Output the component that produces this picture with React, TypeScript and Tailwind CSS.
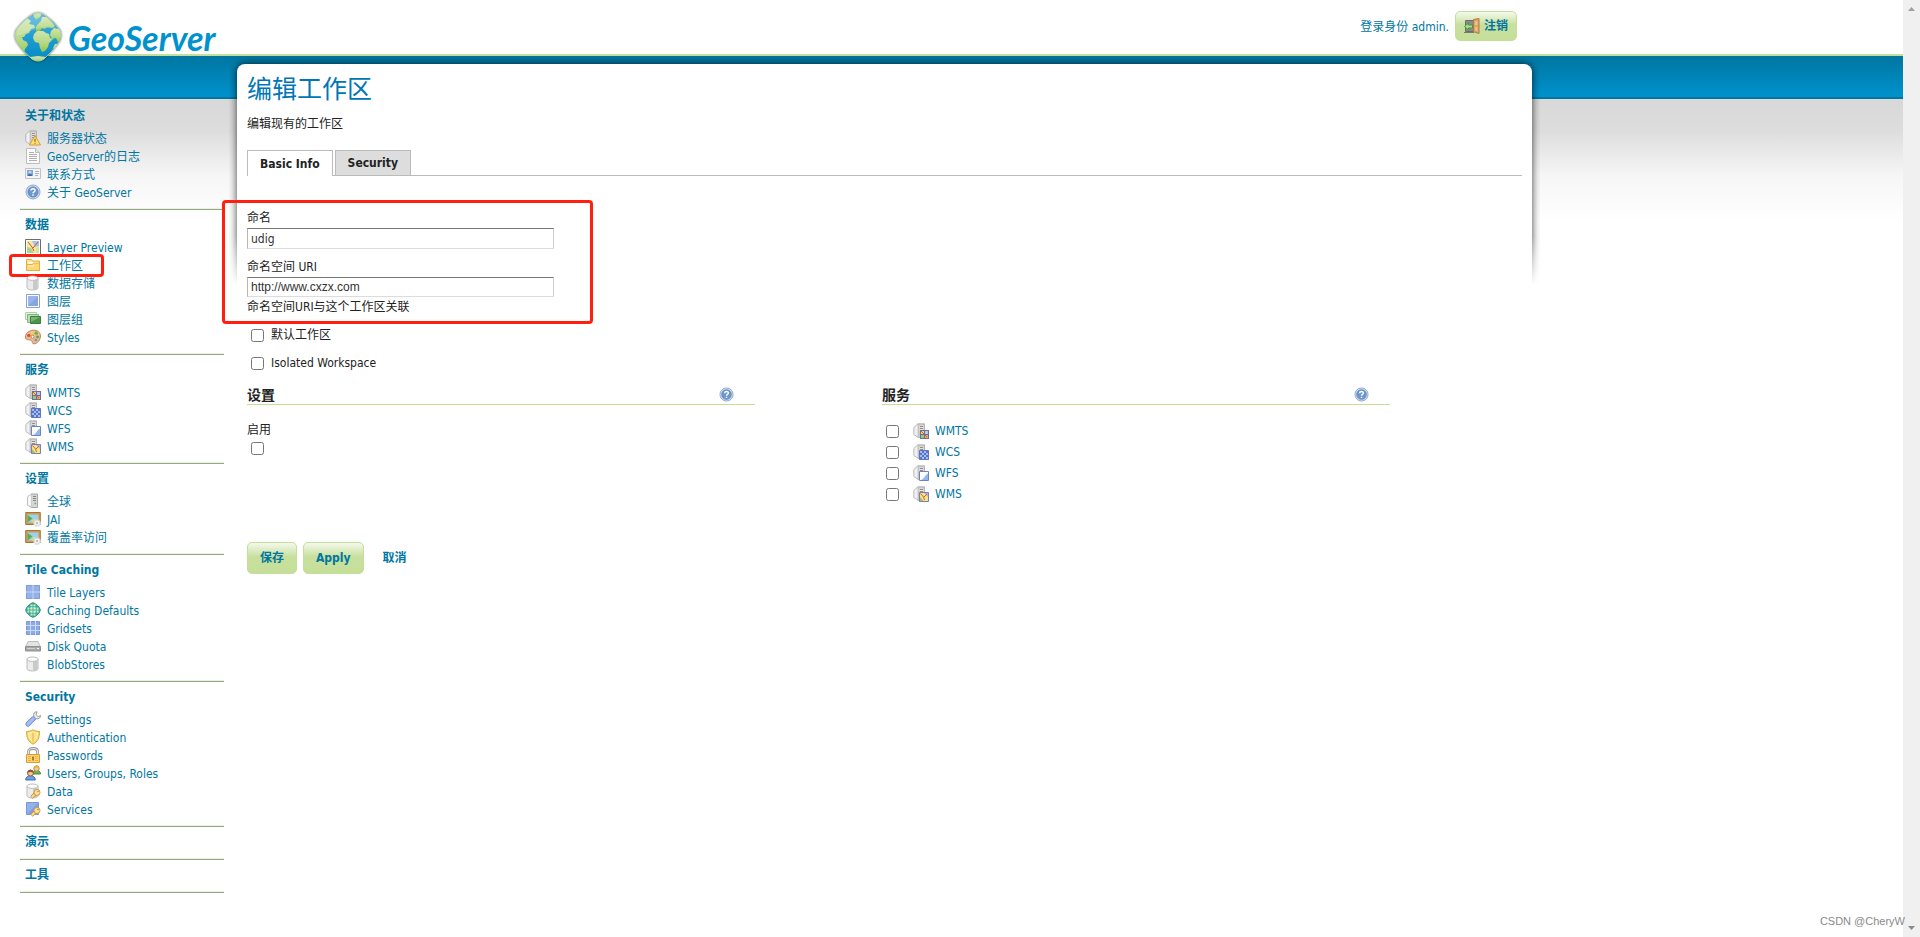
import { useState } from "react";
import type { ReactNode } from "react";

function Icon({ children, size = 16 }: { children: ReactNode; size?: number }) {
  return (
    <svg width={size} height={size} viewBox="0 0 16 16" className="shrink-0" aria-hidden="true">
      {children}
    </svg>
  );
}

/* Shared drawings, reused inside several of the icons below */

function ServerTower() {
  return (
    <>
      <path d="M1 4.5 5 .8h6.5v11.7L9 14.5H5.500l-4.500-3z" fill="#cbcbcb" stroke="#a8a8a8" strokeWidth=".8" />
      <path d="M1 4.5 5 .8v13.400L1 11.500z" fill="#f1f1f1" stroke="#b4b4b4" strokeWidth=".6" />
      <path d="M6.500 2.500h4v6h-4z" fill="#e2e2e2" />
      <path d="M7 3.500h3M7 5.500h3M7 7.500h3" stroke="#8f8f8f" />
    </>
  );
}

function Cylinder() {
  return (
    <>
      <path d="M2 3.2v9.600c0 1.200 2.400 2.200 5.500 2.200s5.500-1 5.500-2.200V3.200" fill="#ececec" stroke="#bcbcbc" />
      <path d="M8 5.500v9.200c2.500-.2 4.500-.9 4.500-1.800V4.500z" fill="#c9c9c9" />
      <ellipse cx="7.5" cy="3.2" rx="5.5" ry="2.2" fill="#fcfcfc" stroke="#bcbcbc" />
    </>
  );
}

function Key() {
  return (
    <>
      <path d="m11 10-4.500 4.500" stroke="#c08a35" strokeWidth="3.4" />
      <path d="m11 10-4.200 4.200" stroke="#ffdc86" strokeWidth="2" />
      <circle cx="12" cy="9.5" r="3" fill="#ffe09a" stroke="#cc9a45" />
      <circle cx="13" cy="8.6" r=".7" fill="#94681f" />
    </>
  );
}

function StatusIcon() {
  return (
    <Icon>
      <ServerTower />
      <path d="m10 5.500 5.500 9.500h-11z" fill="#ffe06a" stroke="#d79a3e" strokeLinejoin="round" />
      <path d="M10 8.800v3M10 12.800v1" stroke="#8a6a1c" strokeWidth="1.2" />
    </Icon>
  );
}

function PageIcon() {
  return (
    <Icon>
      <path d="M1.5.5h9l4 4v11h-13z" fill="#fbfbfb" stroke="#bdbdbd" />
      <path d="M10.5.5v4h4" fill="#e4e4e4" stroke="#bdbdbd" />
      <path d="M4 4.500h5M4 6.500h8M4 8.500h8M4 10.500h8M4 12.500h8" stroke="#b0b0b0" />
    </Icon>
  );
}

function VcardIcon() {
  return (
    <Icon>
      <path d="M.5 2.500h15v10H.5z" fill="#f4f4f4" stroke="#c0c3c8" />
      <path d="M2 4h6v6H2z" fill="#74acea" />
      <circle cx="5" cy="6.2" r="1.4" fill="#f3c79a" />
      <path d="M2.800 10c.2-3 4.200-3 4.400 0z" fill="#3b6cb2" />
      <path d="M10 5.500h4M10 7.500h4M10 9.500h3" stroke="#a9b0b9" />
    </Icon>
  );
}

function HelpIcon({ size = 16 }: { size?: number }) {
  return (
    <Icon size={size}>
      <circle cx="8" cy="8" r="7" fill="#cfdef2" stroke="#8eaad2" />
      <circle cx="8" cy="8" r="5.2" fill="#6d96cb" stroke="#5780ba" strokeWidth=".6" />
      <path d="M6 6.600c0-2.500 4-2.400 4-.2 0 1.500-2 1.500-2 2.900M8 10.300v1.500" fill="none" stroke="#fff" strokeWidth="1.5" />
    </Icon>
  );
}

function PreviewIcon() {
  return (
    <Icon>
      <path d="M.5.5h15v15H.5z" fill="#fff" stroke="#6a6d70" />
      <path d="M2 2h12v12H2z" fill="#f3eb9c" />
      <path d="M7 2h7v5l-4 1z" fill="#a5c5ec" />
      <path d="m2 8 4 1 3 5H2z" fill="#aad48d" />
      <path d="m11 9 3-1v6h-3z" fill="#d5e196" />
      <path d="m3 3 4 5 2 4M8 9l5-6" fill="none" stroke="#dc4a38" />
    </Icon>
  );
}

function FolderIcon() {
  return (
    <Icon>
      <path d="M1.500 2.500h5l1 1.500h7v9.500h-13z" fill="#ffe396" stroke="#dcae45" />
      <path d="M3.500 5h10v2.500h-10z" fill="#fffbe8" />
      <path d="M1.500 7.500h6l1-1.500h6v7.500h-13z" fill="#fbd870" stroke="#dfb04b" />
      <path d="M3 9h6" stroke="#fff5cf" />
    </Icon>
  );
}

function StoreIcon() {
  return (
    <Icon>
      <Cylinder />
    </Icon>
  );
}

function LayerIcon() {
  return (
    <Icon>
      <path d="M1.500 1.500h13v13h-13z" fill="#fff" stroke="#8c9fce" />
      <path d="M3 3h10v10H3z" fill="#86a5e0" />
      <path d="M3 3h10L3 13z" fill="#98b5ea" />
    </Icon>
  );
}

function LayerGroupIcon() {
  return (
    <Icon>
      <path d="M.5 1.500h11v7H.5z" fill="#e0f0de" stroke="#aed2ab" />
      <path d="M2.500 3.500h11v8h-11z" fill="#bcdcb8" stroke="#82b67e" />
      <path d="M5.500 5.500h10v7h-10z" fill="#4b9449" stroke="#3c7c3d" />
      <path d="M6 6h9l-9 5z" fill="#78b475" />
    </Icon>
  );
}

function PaletteIcon() {
  return (
    <Icon>
      <path
        d="M8 1.200c4.400-.4 7.500 2.200 7.500 5.600 0 4-3 8-6.500 8-2.300 0-1-2.400-3-3.500-1.800-1-5.500.4-5.500-3.300 0-3.500 3.300-6.400 7.500-6.800z"
        fill="#ecbc8c"
        stroke="#bd8350"
      />
      <circle cx="3.8" cy="6.4" r="1.6" fill="#e8453a" />
      <circle cx="7" cy="3.8" r="1.4" fill="#f4d84c" />
      <circle cx="11.2" cy="4.2" r="1.6" fill="#5cb64f" />
      <circle cx="12.6" cy="8" r="1.4" fill="#4aa65f" />
      <circle cx="7.6" cy="7.8" r="1.5" fill="#fff" stroke="#a9672f" strokeWidth=".7" />
      <circle cx="10.8" cy="11" r="1.3" fill="#6a90dc" />
    </Icon>
  );
}

function WmtsIcon() {
  return (
    <Icon>
      <ServerTower />
      <path d="M7 7h9v9H7z" fill="#6c6f9c" />
      <path d="M8 8h3v3H8z" fill="#f8d05c" />
      <path d="M12 8h3v3h-3z" fill="#b7c8ee" />
      <path d="M8 12h3v3H8z" fill="#8fcb74" />
      <path d="M12 12h3v3h-3z" fill="#f3a566" />
      <path d="m8 8 3 3M12 12l2 2" stroke="#e0563f" />
    </Icon>
  );
}

function WcsIcon() {
  return (
    <Icon>
      <ServerTower />
      <path d="M6.500 6.500h9v9h-9z" fill="#5475cb" stroke="#6673ba" />
      <path d="M7 7h2v2H7zM11 7h2v2h-2zM9 9h2v2H9zM13 9h2v2h-2zM7 11h2v2H7zM11 11h2v2h-2zM9 13h2v2H9zM13 13h2v2h-2z" fill="#a5bdf0" />
    </Icon>
  );
}

function WfsIcon() {
  return (
    <Icon>
      <ServerTower />
      <path d="M6.500 6.500h9v9h-9z" fill="#fff" stroke="#7382bf" />
      <path d="M15 8.500V15H7.500c4-.5 4-5 7.500-6.500z" fill="#8fbaec" />
    </Icon>
  );
}

function WmsIcon() {
  return (
    <Icon>
      <ServerTower />
      <path d="M6.500 6.500h9v9h-9z" fill="#f3e681" stroke="#837bb0" />
      <path d="M11 7h4v4z" fill="#9bbbe9" />
      <path d="M7 11v4h3.500z" fill="#8cc777" />
      <path d="m7.500 7.500 3 3.500 1 3M11 11l3-3" fill="none" stroke="#e4573b" />
    </Icon>
  );
}

function ServerIcon() {
  return (
    <Icon>
      <path d="M2.500 4 6.500 1h6v13.500h-6l-4-2.500z" fill="#d6d6d6" stroke="#a6a6a6" />
      <path d="M2.500 4 6.500 1v13.300L2.500 12z" fill="#f7f7f7" stroke="#b9b9b9" strokeWidth=".6" />
      <path d="M8 3.500h3M8 5.500h3M8 7.500h3" stroke="#858585" />
      <path d="M9.500 10.500H11" stroke="#5cb05c" strokeWidth="1.5" />
    </Icon>
  );
}

function PictureGearIcon() {
  return (
    <Icon>
      <path d="M.7 1.500h14.600v12H.7z" fill="#cf9a4f" stroke="#a87735" />
      <path d="M2.500 3.500h11v8h-11z" fill="#98d3f2" />
      <path d="m2.500 4 5 3.500-5 4z" fill="#5fa84c" />
      <path d="m6 11.500 3-3.700 4.500 1v2.700z" fill="#dede7a" />
      <circle cx="12" cy="12" r="3.200" fill="#e0e0e0" stroke="#cfcfcf" strokeDasharray="1.6 1" strokeWidth="1.5" />
      <circle cx="12" cy="12" r="2.6" fill="#f0f0f0" />
      <circle cx="12" cy="12" r=".9" fill="#a8a8a8" />
    </Icon>
  );
}

function TilesIcon() {
  return (
    <Icon>
      <path d="M1 1h14v14H1z" fill="#809edd" />
      <path d="M2 2h5.500v5.500H2zM8.500 2H14v5.500H8.500zM2 8.500h5.500V14H2zM8.500 8.500H14V14H8.500z" fill="#94b1e8" />
      <path d="M8 1v14M1 8h14" stroke="#d0ddf6" />
    </Icon>
  );
}

function CacheIcon() {
  return (
    <Icon>
      <path d="m8 .7 2.500 1 3.800 3.800 1 2.500-1 2.500-3.800 3.800-2.500 1-2.500-1-3.800-3.800L.7 8l1-2.500 3.800-3.800z" fill="#3fb6a4" stroke="#26897f" />
      <path d="M5.500 2.500h5v3h3v5h-3v3h-5v-3h-3v-5h3z" fill="#c6efca" />
      <path d="M8 1v14M1 8h14M4.700 3v10M11.300 3v10M3 4.700h10M3 11.300h10" stroke="#3fa88f" strokeWidth=".8" />
    </Icon>
  );
}

function GridIcon() {
  return (
    <Icon>
      <path d="M1.500 1.500h13v13h-13z" fill="#8aa9e5" stroke="#7a99db" />
      <path d="M5.500 1v14M10.500 1v14M1 5.500h14M1 10.500h14" stroke="#cddbf5" />
    </Icon>
  );
}

function DiskIcon() {
  return (
    <Icon>
      <path d="m3 3.500-2.500 6h15l-2.500-6z" fill="#e3e3e3" stroke="#bdbdbd" />
      <path d="M.5 8.500h15V13H.5z" fill="#a8a8a8" stroke="#919191" />
      <path d="M2 10.500h8" stroke="#cfcfcf" />
      <path d="M12 10.500h2" stroke="#f5f5f5" />
    </Icon>
  );
}

function WrenchIcon() {
  return (
    <Icon>
      <path d="M12 .8C9.600.6 7.900 2.800 8.800 5.200L7 7l2.500 2.500 1.800-1.800c2.200.8 4.300-.8 4.200-3.200l-2.300 1.300-2-2z" fill="#ececec" stroke="#989898" />
      <path d="M8.200 7.800 3 13" stroke="#6c88ca" strokeWidth="5" strokeLinecap="round" />
      <path d="M8.200 7.800 3 13" stroke="#a3bdf2" strokeWidth="3.4" strokeLinecap="round" />
    </Icon>
  );
}

function ShieldIcon() {
  return (
    <Icon>
      <path d="M1.500 2.500C4 2.500 6 2 8 .8c2 1.200 4 1.700 6.500 1.700 0 6-1.500 10-6.500 12.700-5-2.700-6.500-6.700-6.500-12.700z" fill="#fbd65c" stroke="#dda733" />
      <path d="M3.500 4C5 4 6.600 3.600 8 2.800c1.400.8 3 1.200 4.500 1.200 0 4-1.300 7-4.500 9-3.200-2-4.500-5-4.500-9z" fill="#fde58e" stroke="#fff6cf" />
      <path d="M8 3.500V13" stroke="#e6b040" />
    </Icon>
  );
}

function LockIcon() {
  return (
    <Icon>
      <path d="M3.500 8V4.500c0-4 9-4 9 0V8" fill="none" stroke="#989898" strokeWidth="2.8" />
      <path d="M3.500 8V4.500c0-4 9-4 9 0V8" fill="none" stroke="#e4e4e4" strokeWidth="1.2" />
      <path d="M1.500 7.500h13v8h-13z" fill="#ffd76c" stroke="#dc9a3a" />
      <path d="M3 9.500h3M3 11.500h3M3 13.500h3M10 9.500h3M10 11.500h3M10 13.500h3" stroke="#eeb04a" />
      <path d="M8 9.500v4" stroke="#94681f" strokeWidth="1.6" />
    </Icon>
  );
}

function UsersIcon() {
  return (
    <Icon>
      <path d="M7.500 9c0-5 8-5 8 0z" fill="#68b258" stroke="#4a8a40" />
      <circle cx="11.5" cy="3.5" r="2.7" fill="#f3c79a" stroke="#b98a3c" />
      <path d="M8.800 3.500c0-4 5.400-4 5.400 0-1.500-1.200-4-1.200-5.400 0z" fill="#e3b23c" />
      <path d="M.7 15c0-6 9.600-6 9.600 0z" fill="#6a9fe6" stroke="#3c6eb6" />
      <circle cx="5.5" cy="8" r="3" fill="#f3c79a" stroke="#9a5a33" />
      <path d="M2.500 8c0-4.500 6-4.500 6 0-1.500-1.300-4.500-1.300-6 0z" fill="#9a5530" />
    </Icon>
  );
}

function DataKeyIcon() {
  return (
    <Icon>
      <Cylinder />
      <Key />
    </Icon>
  );
}

function ServiceKeyIcon() {
  return (
    <Icon>
      <path d="M1.500 1.500h12v12h-12z" fill="#7f9fe0" stroke="#7a99da" />
      <path d="M2 2h11L2 13z" fill="#94b1ea" />
      <Key />
    </Icon>
  );
}

function DoorIcon() {
  return (
    <Icon>
      <path d="M1.500 2.500h8v11h-8z" fill="#8a8a8a" stroke="#6c6c6c" />
      <path d="M0 14h10v1H0z" fill="#777" />
      <path d="M9.500 1.500 15 .5v15l-5.500-1.800z" fill="#dda365" stroke="#b07a40" />
      <path d="m11 3.500 2.500-.5v4l-2.500.2zM11 9l2.500.2v4L11 12.500z" fill="#edc08c" />
      <path d="M.5 8.500 4.500 5v2h4v3h-4v2z" fill="#a4dd8b" stroke="#4a9640" />
    </Icon>
  );
}

function Logo() {
  return (
    <svg width="52" height="54" viewBox="0 0 52 54" className="relative shrink-0" aria-hidden="true">
      <defs>
        <linearGradient id="sea" x1="0" y1="0" x2="0" y2="1">
          <stop offset="0" stopColor="#45b0e0" />
          <stop offset="1" stopColor="#0089c4" />
        </linearGradient>
        <linearGradient id="land" x1="0" y1="0" x2="0" y2="1">
          <stop offset="0" stopColor="#cfe6ac" />
          <stop offset=".6" stopColor="#b4d884" />
          <stop offset="1" stopColor="#93c83f" />
        </linearGradient>
        <clipPath id="globe">
          <path d="M20 4q6-4 12 0 9 6 15 14 4 6 0 13-7 10-15 17-6 4-12 0Q11 41 5 31q-4-7 0-13 6-8 15-14z" />
        </clipPath>
        <filter id="soft" x="-20%" y="-20%" width="140%" height="140%">
          <feDropShadow dx="0" dy="0" stdDeviation="1" floodOpacity=".7" />
        </filter>
      </defs>
      <g filter="url(#soft)">
        <path d="M20 4q6-4 12 0 9 6 15 14 4 6 0 13-7 10-15 17-6 4-12 0Q11 41 5 31q-4-7 0-13 6-8 15-14z" fill="url(#sea)" stroke="#9fc0b8" />
      </g>
      <g clipPath="url(#globe)" fill="url(#land)">
        {/* americas */}
        <path d="M2 18 9 11l6-4 4 3-2 3 5 1 1 3-4 1-2 4-3 1-2 3h-2l1 3 4 2 1 3-3 4-1 5 1 3-6-4-6-8z" />
        {/* greenland and europe */}
        <path d="m21 2 9 0-2 4-4 3-2-3z" />
        <path d="m26 13 3-3 1-4 5 0 5 5 3 4-3 2-5-1-2 2-3-1-2 3-4 0 0-4z" />
        {/* africa */}
        <path d="m22 23 3-3 6 0 3 2 3 1 1 4 3 1-4 4-1 4-3 4-3 1-2-4-1-5-4-1-2-4z" />
        {/* asia */}
        <path d="m39 20 3-3 5 1 4 6-1 7-4 0-2-4-4 1-2-4z" />
        <path d="m43 33 3 0-3 6-2-2z" />
        {/* antarctica */}
        <path d="m18 46 8-1 8 1 1 5H17z" />
      </g>
      <path d="M20 5q6-4 12 0 7 5 12 12-18-2-39 8Q4 20 8 15q5-6 12-10z" fill="#fff" opacity=".2" />
    </svg>
  );
}

type MenuItem = { label: string; icon: ReactNode; marked?: boolean };

const MENU: { title: string; items: MenuItem[] }[] = [
  {
    title: "关于和状态",
    items: [
      { label: "服务器状态", icon: <StatusIcon /> },
      { label: "GeoServer的日志", icon: <PageIcon /> },
      { label: "联系方式", icon: <VcardIcon /> },
      { label: "关于 GeoServer", icon: <HelpIcon /> },
    ],
  },
  {
    title: "数据",
    items: [
      { label: "Layer Preview", icon: <PreviewIcon /> },
      { label: "工作区", icon: <FolderIcon />, marked: true },
      { label: "数据存储", icon: <StoreIcon /> },
      { label: "图层", icon: <LayerIcon /> },
      { label: "图层组", icon: <LayerGroupIcon /> },
      { label: "Styles", icon: <PaletteIcon /> },
    ],
  },
  {
    title: "服务",
    items: [
      { label: "WMTS", icon: <WmtsIcon /> },
      { label: "WCS", icon: <WcsIcon /> },
      { label: "WFS", icon: <WfsIcon /> },
      { label: "WMS", icon: <WmsIcon /> },
    ],
  },
  {
    title: "设置",
    items: [
      { label: "全球", icon: <ServerIcon /> },
      { label: "JAI", icon: <PictureGearIcon /> },
      { label: "覆盖率访问", icon: <PictureGearIcon /> },
    ],
  },
  {
    title: "Tile Caching",
    items: [
      { label: "Tile Layers", icon: <TilesIcon /> },
      { label: "Caching Defaults", icon: <CacheIcon /> },
      { label: "Gridsets", icon: <GridIcon /> },
      { label: "Disk Quota", icon: <DiskIcon /> },
      { label: "BlobStores", icon: <StoreIcon /> },
    ],
  },
  {
    title: "Security",
    items: [
      { label: "Settings", icon: <WrenchIcon /> },
      { label: "Authentication", icon: <ShieldIcon /> },
      { label: "Passwords", icon: <LockIcon /> },
      { label: "Users, Groups, Roles", icon: <UsersIcon /> },
      { label: "Data", icon: <DataKeyIcon /> },
      { label: "Services", icon: <ServiceKeyIcon /> },
    ],
  },
  { title: "演示", items: [] },
  { title: "工具", items: [] },
];

const SERVICES = [
  { name: "WMTS", icon: <WmtsIcon /> },
  { name: "WCS", icon: <WcsIcon /> },
  { name: "WFS", icon: <WfsIcon /> },
  { name: "WMS", icon: <WmsIcon /> },
];

const BUTTON =
  "rounded-[5px] border border-[#c5de9b] bg-linear-to-b from-[#f4f9ec] via-[#c8e09e] via-45% to-[#c5df99] font-bold text-[#0076a1]";

function Header() {
  return (
    <header className="flex h-14 border-b-2 border-[#c5df99]">
      <a href="#" className="flex items-start pt-[11px] pl-3 text-[#0092cd]">
        <Logo />
        <span className="pt-[7px] pl-1 font-['Lato',sans-serif] text-[34px] leading-[40px] font-bold italic">
          GeoServer
        </span>
      </a>
      <div className="flex flex-1 items-start justify-end gap-[6px] pt-[11px] pr-[386px] text-[#0076a1]">
        <span className="leading-8">登录身份 admin.</span>
        <button type="button" className={`${BUTTON} flex h-[30px] items-center gap-1 px-2`}>
          <DoorIcon />
          注销
        </button>
      </div>
    </header>
  );
}

function Sidebar() {
  return (
    <nav className="w-[237px] shrink-0 pt-[45px] pr-[13px] pl-5 text-[#0076a1]">
      {MENU.map((group) => (
        <section
          key={group.title}
          className="border-b border-[#98a587] pb-[7px] pl-[5px] shadow-[inset_0_-1px_0_#e8f3d9]"
        >
          <h2 className="pt-[7px] pb-[2px] leading-4 font-bold">{group.title}</h2>
          {group.items.length > 0 && (
            <ul className="mt-1">
              {group.items.map((item) => (
                <li key={item.label} className="relative h-[18px]">
                  <a href="#" className="flex gap-[6px] leading-[18px] whitespace-nowrap">
                    {item.icon}
                    {item.label}
                  </a>
                  {item.marked && (
                    <span className="pointer-events-none absolute -top-[3px] -left-4 h-[23px] w-[95px] rounded-[4px] border-3 border-[#ff1e10]" />
                  )}
                </li>
              ))}
            </ul>
          )}
        </section>
      ))}
    </nav>
  );
}

function SectionTitle({ title }: { title: string }) {
  return (
    <div className="flex h-5 items-center justify-between border-b border-[#c5df99] pr-[21px]">
      <h3 className="text-[14px] leading-5 font-bold">{title}</h3>
      <button type="button" aria-label={`${title} help`}>
        <HelpIcon size={15} />
      </button>
    </div>
  );
}

const FIELD =
  "block w-[307px] border border-t-[#767676] border-r-[#cfcfcf] border-b-[#dcdcdc] border-l-[#b8b8b8] px-[3px] text-[#333]";

function WorkspaceForm() {
  const [name, setName] = useState("udig");
  const [uri, setUri] = useState("http://www.cxzx.com");

  return (
    <form className="pt-8" onSubmit={(e) => e.preventDefault()}>
      <div className="relative">
        <label htmlFor="name" className="block h-5 leading-5">
          命名
        </label>
        <input id="name" value={name} onChange={(e) => setName(e.target.value)} className={`${FIELD} h-[21px]`} />
        <label htmlFor="uri" className="mt-2 block h-5 leading-5">
          命名空间 URI
        </label>
        <input
          id="uri"
          value={uri}
          onChange={(e) => setUri(e.target.value)}
          className={`${FIELD} h-5 font-['Liberation_Sans',sans-serif]`}
        />
        <p className="leading-5">命名空间URI与这个工作区关联</p>
        <div className="pointer-events-none absolute -top-2 -left-[25px] h-[124px] w-[371px] rounded-[4px] border-3 border-[#ff1e10]" />
      </div>

      <label className="mt-2 flex h-5 items-center gap-[7px] pl-1">
        <input type="checkbox" className="size-[13px]" />
        默认工作区
      </label>
      <label className="mt-2 flex h-5 items-center gap-[7px] pl-1">
        <input type="checkbox" className="size-[13px]" />
        Isolated Workspace
      </label>

      <div className="mt-3 flex gap-[127px]">
        <section className="w-[calc(40%-2px)]">
          <SectionTitle title="设置" />
          <label htmlFor="enabled" className="mt-[15px] block leading-5">
            启用
          </label>
          <input id="enabled" type="checkbox" className="mt-[2px] ml-1 block size-[13px]" />
        </section>
        <section className="w-[calc(40%-2px)]">
          <SectionTitle title="服务" />
          <ul className="mt-4 space-y-px">
            {SERVICES.map((s) => (
              <li key={s.name} className="flex h-5 items-center gap-[14px] pl-1">
                <input type="checkbox" className="size-[13px]" aria-label={s.name} />
                <a href="#" className="flex items-center gap-[6px] text-[#0076a1]">
                  {s.icon}
                  {s.name}
                </a>
              </li>
            ))}
          </ul>
        </section>
      </div>

      <div className="mt-[38px] flex items-center gap-[6px]">
        <button type="submit" className={`${BUTTON} h-8 px-3`}>
          保存
        </button>
        <button type="button" className={`${BUTTON} h-8 px-3`}>
          Apply
        </button>
        <a href="#" className="px-[13px] font-bold text-[#0076a1]">
          取消
        </a>
      </div>
    </form>
  );
}

function Tabs() {
  return (
    <div role="tablist" className="mt-4 flex h-[26px] font-bold">
      <button type="button" role="tab" aria-selected="true" className="border-t border-r border-l border-[#bbb] px-3">
        Basic Info
      </button>
      <span className="w-[2px] border-b border-[#bbb]" />
      <button type="button" role="tab" aria-selected="false" className="border border-[#bbb] bg-[#ddd] px-3">
        Security
      </button>
      <span className="flex-1 border-b border-[#bbb]" />
    </div>
  );
}

function ScrollBar() {
  return (
    <div className="flex w-[17px] shrink-0 flex-col items-center justify-between bg-[#f0f0f0] py-[7px]" aria-hidden="true">
      <svg width="7" height="4" viewBox="0 0 7 4">
        <path d="m3.500 0 3.500 4H0z" fill="#a0a0a0" />
      </svg>
      <svg width="7" height="4" viewBox="0 0 7 4">
        <path d="M0 0h7L3.500 4z" fill="#8a8a8a" />
      </svg>
    </div>
  );
}

export default function App() {
  return (
    <div className="relative flex min-h-screen bg-white font-['DejaVu_Sans_Condensed','Noto_Sans','Noto_Sans_CJK_SC',sans-serif] text-[12px] text-[#222]">
      <div className="min-w-0 flex-1">
        <Header />
        {/* blue band, dark edge, then the grey fade */}
        <div className="flex items-start bg-[linear-gradient(#0076a1,#0092cd_41px,#0076a1_41px,#0076a1_43px,#d8d8d8_43px,#dddddd_75px,#f6f6f6_120px,#ffffff_165px)]">
          <Sidebar />
          <main className="relative mt-2 mr-[371px] min-w-0 flex-1">
            <div className="pointer-events-none absolute -inset-x-2 -top-2 h-[230px] [mask-image:linear-gradient(#000_180px,transparent)] px-2 pt-2">
              <div className="h-full rounded-t-[8px] bg-white shadow-[0_0_8px_rgba(0,0,0,0.75)]" />
            </div>
            <div className="relative px-[10px] pt-[10px]">
              <h1 className="text-[25px] leading-8 text-[#0076b5]">编辑工作区</h1>
              <p className="mt-2 leading-5">编辑现有的工作区</p>
              <Tabs />
              <WorkspaceForm />
            </div>
          </main>
        </div>
      </div>
      <ScrollBar />
      <span className="absolute right-[15px] bottom-[8px] font-['Liberation_Sans',sans-serif] text-[11px] leading-4 text-[#8a8a8a]">
        CSDN @CheryW
      </span>
    </div>
  );
}
